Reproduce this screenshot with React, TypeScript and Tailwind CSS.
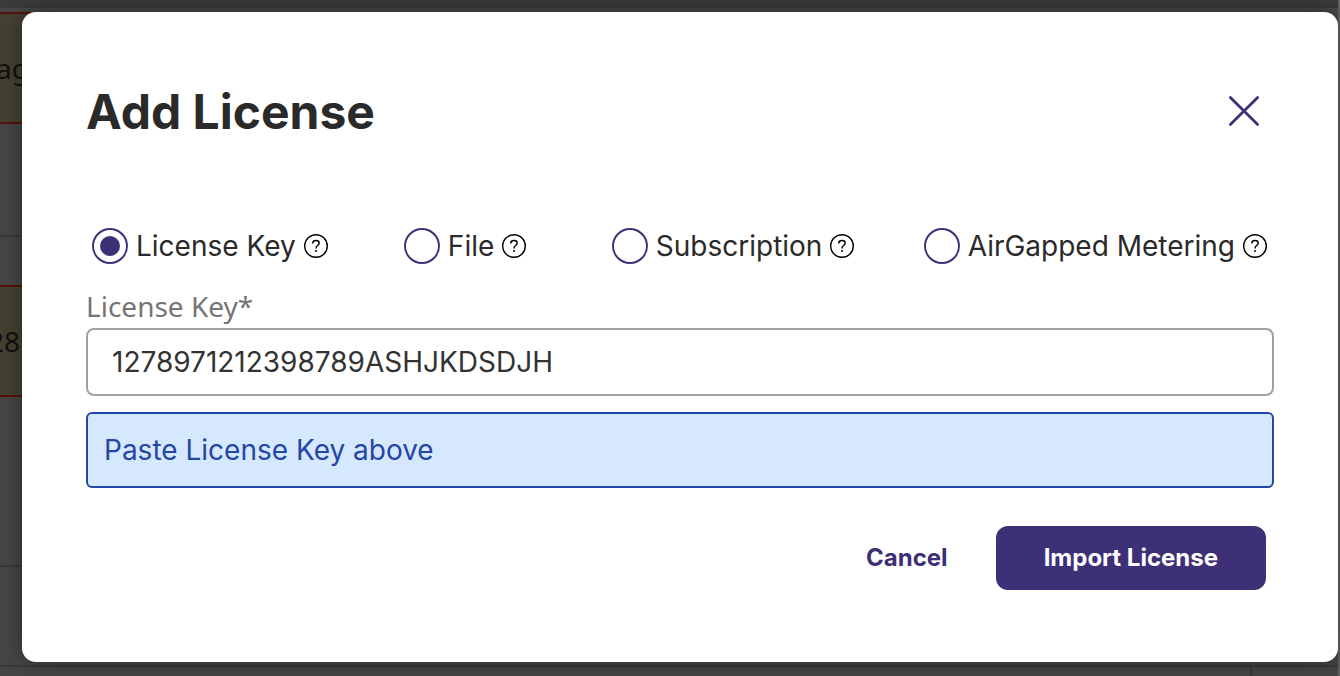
import { useState } from "react";

const licenseTypes = [
  { id: "key", label: "License Key" },
  { id: "file", label: "File" },
  { id: "subscription", label: "Subscription" },
  { id: "airgapped", label: "AirGapped Metering" },
];

const HelpIcon = () => (
  <svg
    viewBox="0 0 24 24"
    className="size-6 shrink-0 text-black"
    fill="none"
    stroke="currentColor"
    aria-hidden="true"
  >
    <circle cx="12" cy="12" r="11.3" strokeWidth="1.4" />
    <path
      d="M8.8 9.1C8.8 7.5 10.1 6.5 12 6.5s3.2 1 3.2 2.5c0 1.3-.7 1.9-1.6 2.5-1 .7-1.5 1.2-1.5 2.5"
      strokeWidth="1.4"
      strokeLinecap="round"
    />
    <circle cx="12" cy="17" r="1" fill="currentColor" stroke="none" />
  </svg>
);

const CloseIcon = () => (
  <svg
    viewBox="0 0 32 32"
    className="size-8"
    fill="none"
    stroke="currentColor"
    strokeWidth="2.8"
    strokeLinecap="round"
    aria-hidden="true"
  >
    <path d="M2.4 2.4l27.2 27.2M29.6 2.4L2.4 29.6" />
  </svg>
);

// Dimmed license list that stays visible behind the dialog
const PageBehind = () => (
  <div className="absolute inset-0 flex flex-col overflow-hidden bg-[#464646] font-['Noto_Sans',sans-serif] text-[28px] text-[#111111]">
    <div className="h-2.5 shrink-0 border-b-2 border-[#484848] bg-[#3b3b3b]" />
    <div className="mt-0.5 mr-4 flex h-28 shrink-0 items-center border-y-2 border-[#5a110b] bg-[#454132]">
      <span className="-ml-1">ag</span>
    </div>
    <div className="h-[113px] shrink-0 border-b-2 border-[#393939]" />
    <div className="mt-12 mr-4 flex h-28 shrink-0 items-center border-y-2 border-[#5a110b] bg-[#454132]">
      <span className="-ml-3">28</span>
    </div>
    <div className="h-[170px] shrink-0 border-b-2 border-[#393939]" />
    <div className="h-[100px] shrink-0 border-b-2 border-[#393939]" />
    <div className="mr-[86px] grow border-r-2 border-[#393939]" />
  </div>
);

const App = () => {
  const [licenseType, setLicenseType] = useState("key");
  const [licenseKey, setLicenseKey] = useState("1278971212398789ASHJKDSDJH");

  return (
    <div className="relative min-h-screen border-r-2 border-[#636363] pt-3 pb-3.5 pl-[22px] font-['Inter',sans-serif] text-[#2a2a2a]">
      <PageBehind />

      <div
        role="dialog"
        aria-modal="true"
        aria-labelledby="dialog-title"
        className="relative rounded-[14px] bg-white px-16 pt-16 pb-[72px] shadow-[0_0_24px_rgba(0,0,0,0.4)]"
      >
        <header className="flex items-start justify-between">
          <h1 id="dialog-title" className="text-5xl leading-[72px] font-bold">
            Add License
          </h1>
          <button
            type="button"
            aria-label="Close"
            className="flex h-[70px] w-[60px] items-center justify-center text-[#3e3077]"
          >
            <CloseIcon />
          </button>
        </header>

        <form onSubmit={(e) => e.preventDefault()}>
          <div className="mt-20 grid grid-cols-[3fr_2fr_3fr_auto] pr-[7px] pl-1.5">
            {licenseTypes.map((type) => (
              <label
                key={type.id}
                className="flex h-9 items-center gap-2 text-[28px] whitespace-nowrap"
              >
                <input
                  type="radio"
                  name="license-type"
                  value={type.id}
                  checked={licenseType === type.id}
                  onChange={() => setLicenseType(type.id)}
                  className="flex size-9 shrink-0 appearance-none items-center justify-center rounded-full border-2 border-[#3e3077] before:size-5 before:rounded-full checked:before:bg-[#3e3077]"
                />
                {type.label}
                <HelpIcon />
              </label>
            ))}
          </div>

          <label
            htmlFor="license-key"
            className="mt-[22px] mb-0.5 block font-['Noto_Sans',sans-serif] text-[28px] leading-10 text-[#757575]"
          >
            License Key*
          </label>
          <input
            id="license-key"
            type="text"
            value={licenseKey}
            onChange={(e) => setLicenseKey(e.target.value)}
            className="block h-[68px] w-full rounded-lg border-2 border-[#a0a0a0] px-6 text-[28px] text-[#333333] outline-none"
          />

          <p className="mt-4 rounded-md border-2 border-[#2447a5] bg-[#d6e8fe] px-4 py-4 text-[28px] leading-10 text-[#2447a5]">
            Paste License Key above
          </p>

          <div className="mt-[38px] flex justify-end pr-2 text-2xl font-bold">
            <button type="button" className="h-16 px-12 text-[#3e3077]">
              Cancel
            </button>
            <button
              type="submit"
              className="h-16 rounded-xl bg-[#3e3077] px-12 text-white"
            >
              Import License
            </button>
          </div>
        </form>
      </div>
    </div>
  );
};

export default App;
